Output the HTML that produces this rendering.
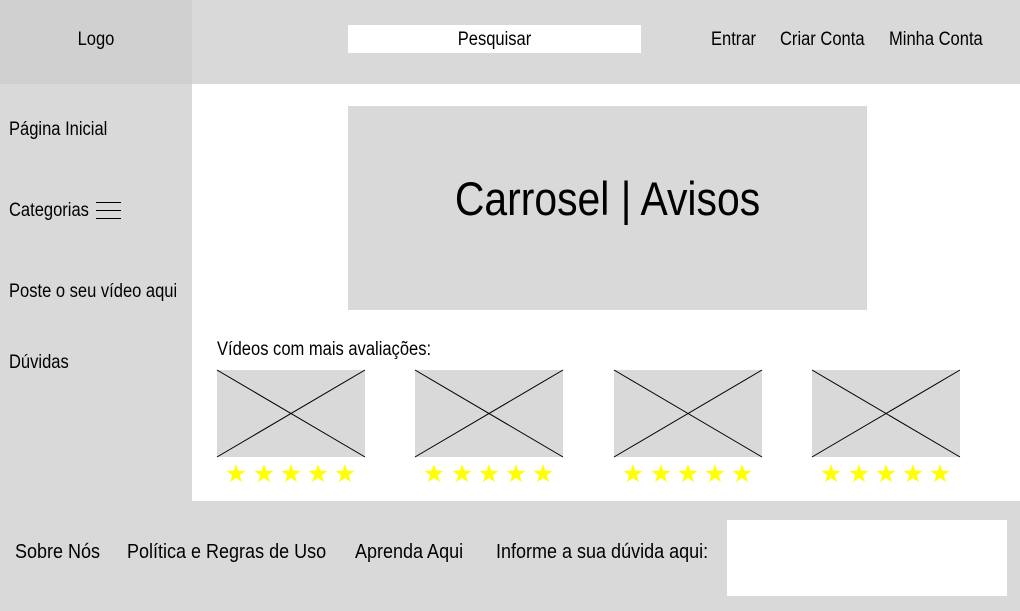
<!DOCTYPE html>
<html><head><meta charset="utf-8"><style>
*{margin:0;padding:0;box-sizing:border-box}
body{width:1020px;height:611px;position:relative;background:#fff;font-family:"Liberation Sans",sans-serif;color:#000;overflow:hidden;font-size:19px}
.a{position:absolute}
.t{position:absolute;white-space:nowrap;line-height:1;transform:scaleX(0.87);transform-origin:left center}
.c{transform-origin:center center}
</style></head><body>
<div class="a" style="left:0;top:0;width:1020px;height:84px;background:#d9d9d9"></div>
<div class="a" style="left:0;top:0;width:192px;height:84px;background:#d0d0d0"></div>
<div class="t c" style="left:0;width:192px;text-align:center;top:30px">Logo</div>
<div class="a" style="left:348px;top:25px;width:293px;height:28px;background:#fff"></div>
<div class="t c" style="left:348px;width:293px;text-align:center;top:30px">Pesquisar</div>
<div class="t" style="left:711px;top:30px">Entrar</div>
<div class="t" style="left:780px;top:30px">Criar Conta</div>
<div class="t" style="left:889px;top:30px">Minha Conta</div>

<div class="a" style="left:0;top:84px;width:192px;height:417px;background:#d9d9d9"></div>
<div class="t" style="left:9px;top:120px">Página Inicial</div>
<div class="t" style="left:9px;top:201px">Categorias</div>
<div class="a" style="left:96px;top:202px;width:25px;height:1px;background:#000"></div>
<div class="a" style="left:96px;top:210px;width:25px;height:1px;background:#000"></div>
<div class="a" style="left:96px;top:218px;width:25px;height:1px;background:#000"></div>
<div class="a" style="left:0;top:270px;width:176px;height:40px;overflow:hidden"><div class="t" style="left:9px;top:12px">Poste o seu vídeo aqui</div></div>
<div class="t" style="left:9px;top:353px">Dúvidas</div>

<div class="a" style="left:348px;top:106px;width:519px;height:204px;background:#d9d9d9"></div>
<div class="t c" style="left:348px;width:519px;text-align:center;top:175px;font-size:47px">Carrosel | Avisos</div>

<div class="t" style="left:217px;top:340px">Vídeos com mais avaliações:</div>

<svg class="a" style="left:0;top:0" width="1020" height="611">
<g stroke="#000" stroke-width="1">
<rect x="217" y="370" width="148" height="87" fill="#d9d9d9" stroke="none"/>
<line x1="217" y1="370" x2="365" y2="457"/><line x1="217" y1="457" x2="365" y2="370"/>
<rect x="415" y="370" width="148" height="87" fill="#d9d9d9" stroke="none"/>
<line x1="415" y1="370" x2="563" y2="457"/><line x1="415" y1="457" x2="563" y2="370"/>
<rect x="614" y="370" width="148" height="87" fill="#d9d9d9" stroke="none"/>
<line x1="614" y1="370" x2="762" y2="457"/><line x1="614" y1="457" x2="762" y2="370"/>
<rect x="812" y="370" width="148" height="87" fill="#d9d9d9" stroke="none"/>
<line x1="812" y1="370" x2="960" y2="457"/><line x1="812" y1="457" x2="960" y2="370"/>
</g>
<defs><polygon id="s" points="0,-10 2.35,-3.2 9.5,-3.1 3.8,1.2 5.9,8.1 0,4 -5.9,8.1 -3.8,1.2 -9.5,-3.1 -2.35,-3.2" fill="#ffff00"/></defs>
<g transform="translate(0,474)">
<use href="#s" x="236"/><use href="#s" x="264"/><use href="#s" x="291"/><use href="#s" x="318"/><use href="#s" x="345"/>
<use href="#s" x="434"/><use href="#s" x="462"/><use href="#s" x="489"/><use href="#s" x="516"/><use href="#s" x="543"/>
<use href="#s" x="633"/><use href="#s" x="661"/><use href="#s" x="688"/><use href="#s" x="715"/><use href="#s" x="742"/>
<use href="#s" x="831"/><use href="#s" x="859"/><use href="#s" x="886"/><use href="#s" x="913"/><use href="#s" x="940"/>
</g>
</svg>

<div class="a" style="left:0;top:501px;width:1020px;height:110px;background:#d9d9d9"></div>
<div class="t" style="left:15px;top:542px;font-size:20px;transform:scaleX(0.9)">Sobre Nós</div>
<div class="t" style="left:127px;top:542px;font-size:20px;transform:scaleX(0.9)">Política e Regras de Uso</div>
<div class="t" style="left:355px;top:542px;font-size:20px;transform:scaleX(0.9)">Aprenda Aqui</div>
<div class="t" style="left:496px;top:542px;font-size:20px;transform:scaleX(0.9)">Informe a sua dúvida aqui:</div>
<div class="a" style="left:727px;top:520px;width:280px;height:76px;background:#fff"></div>
</body></html>
